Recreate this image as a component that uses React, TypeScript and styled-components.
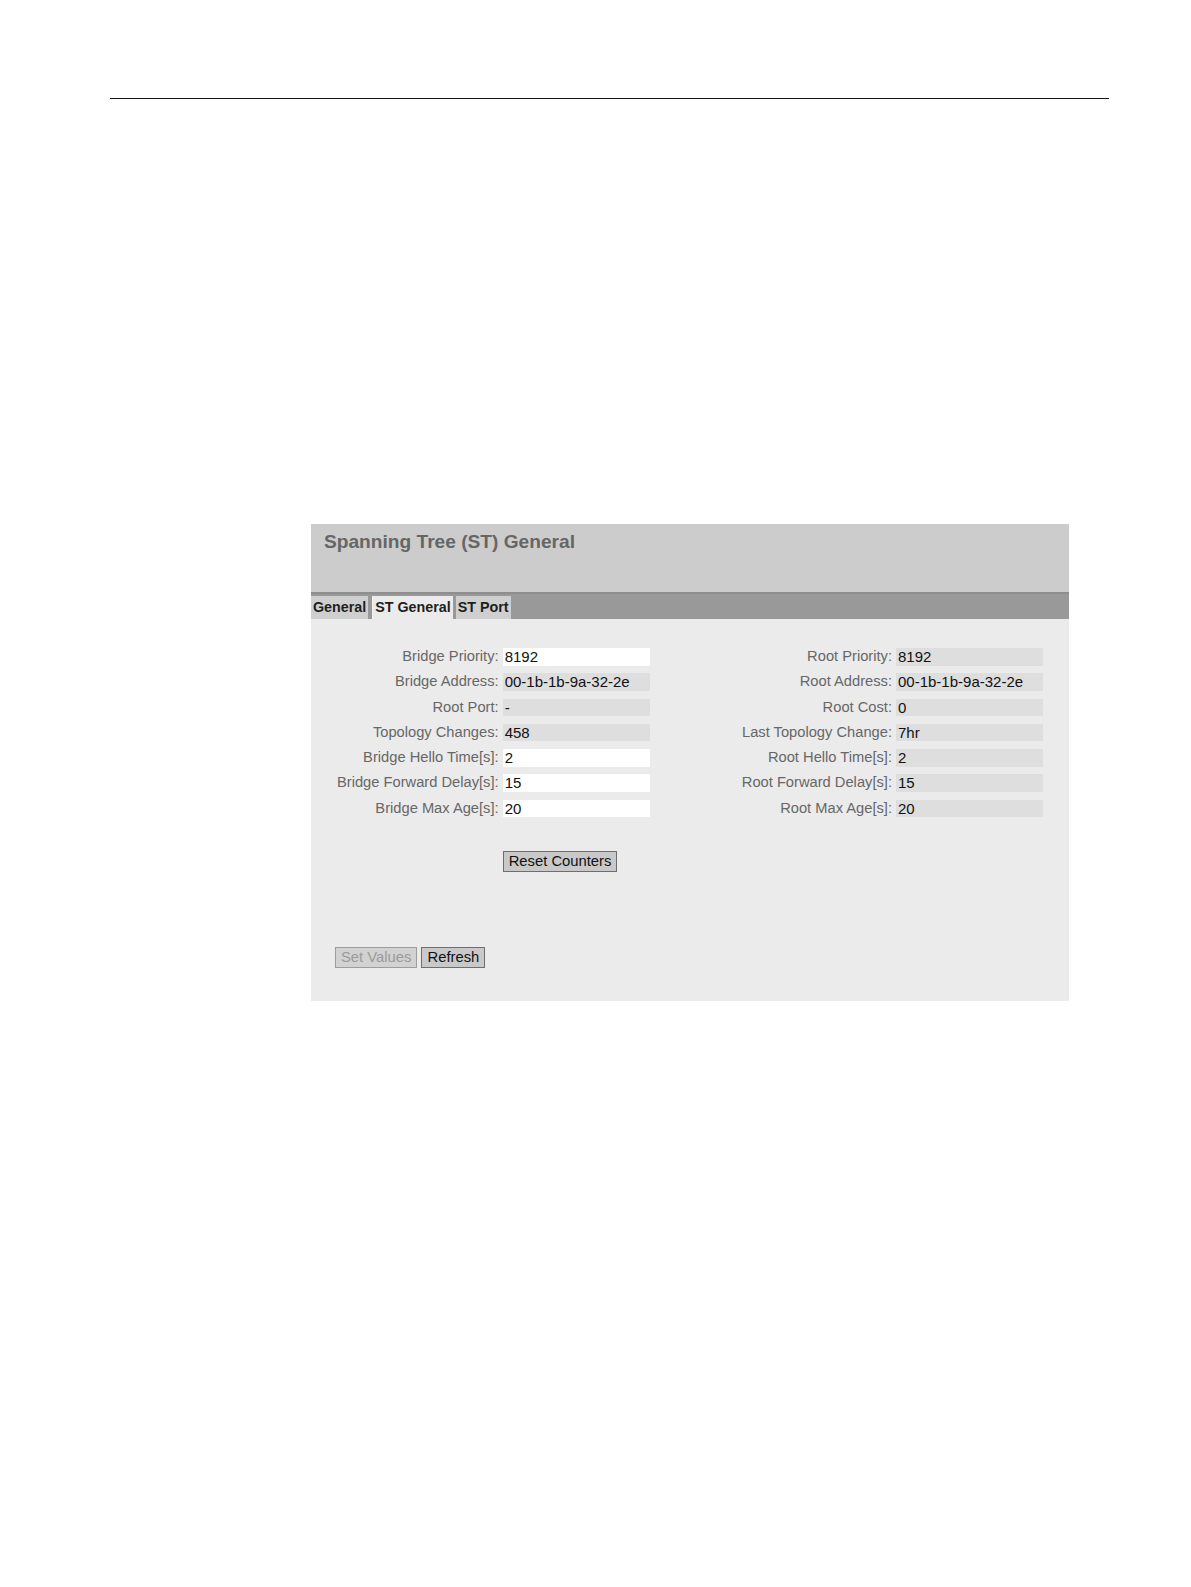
import { Fragment } from "react";
import styled, { createGlobalStyle } from "styled-components";

const GlobalStyle = createGlobalStyle`
	html, body {
		margin: 0;
		padding: 0;
		background: #ffffff;
	}
	body {
		font-family: "Liberation Sans", Arial, sans-serif;
	}
`;

const Page = styled.div`
	padding-top: 98px;
`;

const Rule = styled.hr`
	margin: 0 0 0 110px;
	width: 999px;
	border: 0;
	border-top: 1.5px solid #111;
	height: 0;
`;

const Panel = styled.div`
	margin: 425px 0 0 311px;
	width: 758px;
	background: #ebebeb;
`;

const Header = styled.div`
	height: 68px;
	background: #cccccc;
	box-sizing: border-box;
	padding: 7px 0 0 13px;
`;

const Title = styled.h1`
	margin: 0;
	font-size: 19.15px;
	font-weight: bold;
	line-height: 22px;
	color: #666666;
`;

const TabBar = styled.div`
	height: 27px;
	box-sizing: border-box;
	background: #999999;
	border-top: 2px solid #8e8e8e;
	display: flex;
	align-items: flex-end;
`;

const Tab = styled.div<{ $active?: boolean }>`
	height: 23px;
	box-sizing: border-box;
	padding: 3px 2px 0 2px;
	margin-right: ${p => (p.$active ? "3px" : "4px")};
	font-size: 14.3px;
	font-weight: bold;
	line-height: 17px;
	color: #1e1e1e;
	white-space: nowrap;
	background: ${p => (p.$active ? "#ebebeb" : "#cfcfcf")};
	border-left: ${p => (p.$active ? "1px solid #f3f3f3" : "0")};
`;

const Content = styled.div`
	padding: 29px 26px 33px 26px;
`;

const Columns = styled.div`
	display: flex;
	justify-content: space-between;
	align-items: flex-start;
`;

const Fields = styled.div`
	display: grid;
	grid-template-columns: auto 147px;
	column-gap: 4px;
	row-gap: 7.8px;
	align-items: center;
`;

const Label = styled.label`
	font-size: 14.7px;
	line-height: 17.5px;
	color: #676767;
	text-align: right;
	white-space: nowrap;
`;

const Value = styled.div<{ $editable?: boolean }>`
	height: 17.5px;
	box-sizing: border-box;
	padding: 0 2px;
	font-size: 15px;
	line-height: 17px;
	color: #111;
	white-space: nowrap;
	background: ${p => (p.$editable ? "#ffffff" : "#dedede")};
`;

const ResetCell = styled.div`
	grid-column: 2;
	padding-top: 25.6px;
`;

const Button = styled.button<{ $disabled?: boolean }>`
	font-family: "Liberation Sans", Arial, sans-serif;
	font-size: 14.8px;
	line-height: 17px;
	height: 21.3px;
	padding: 0 5px;
	margin: 0;
	color: ${p => (p.$disabled ? "#9a9a9a" : "#111")};
	background: ${p => (p.$disabled ? "#d2d2d2" : "#c9c9c9")};
	border: 1px solid ${p => (p.$disabled ? "#9d9d9d" : "#6e6e6e")};
	border-radius: 0;
`;

const Actions = styled.div`
	display: flex;
	gap: 4px;
	padding-top: 75px;
	margin-left: -2px;
`;

type Field = { label: string; value: string; editable?: boolean };

const bridge: Field[] = [
	{ label: "Bridge Priority:", value: "8192", editable: true },
	{ label: "Bridge Address:", value: "00-1b-1b-9a-32-2e" },
	{ label: "Root Port:", value: "-" },
	{ label: "Topology Changes:", value: "458" },
	{ label: "Bridge Hello Time[s]:", value: "2", editable: true },
	{ label: "Bridge Forward Delay[s]:", value: "15", editable: true },
	{ label: "Bridge Max Age[s]:", value: "20", editable: true },
];

const root: Field[] = [
	{ label: "Root Priority:", value: "8192" },
	{ label: "Root Address:", value: "00-1b-1b-9a-32-2e" },
	{ label: "Root Cost:", value: "0" },
	{ label: "Last Topology Change:", value: "7hr" },
	{ label: "Root Hello Time[s]:", value: "2" },
	{ label: "Root Forward Delay[s]:", value: "15" },
	{ label: "Root Max Age[s]:", value: "20" },
];

const FieldList = ({ fields, children }: { fields: Field[]; children?: React.ReactNode }) => (
	<Fields>
		{fields.map(f => (
			<Fragment key={f.label}>
				<Label>{f.label}</Label>
				<Value $editable={f.editable}>{f.value}</Value>
			</Fragment>
		))}
		{children}
	</Fields>
);

export default function App() {
	return (
		<Page>
			<GlobalStyle />
			<Rule />
			<Panel>
				<Header>
					<Title>Spanning Tree (ST) General</Title>
				</Header>
				<TabBar>
					<Tab>General</Tab>
					<Tab $active>ST General</Tab>
					<Tab>ST Port</Tab>
				</TabBar>
				<Content>
					<Columns>
						<FieldList fields={bridge}>
							<ResetCell>
								<Button>Reset Counters</Button>
							</ResetCell>
						</FieldList>
						<FieldList fields={root} />
					</Columns>
					<Actions>
						<Button $disabled>Set Values</Button>
						<Button>Refresh</Button>
					</Actions>
				</Content>
			</Panel>
		</Page>
	);
}
